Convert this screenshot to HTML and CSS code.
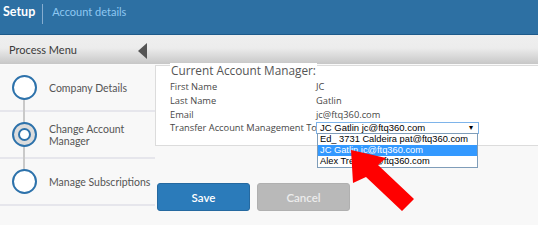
FILE: index.html
```html
<!DOCTYPE html>
<html>
<head>
<meta charset="utf-8">
<link rel="stylesheet" href="styles.css">
</head>
<body>
<header class="topbar">
  <span class="brand">Setup</span>
  <span class="divider"></span>
  <span class="crumb">Account details</span>
</header>
<div class="menubar">
  <span class="menu-title">Process Menu</span>
  <span class="collapse"></span>
</div>
<div class="main">
  <nav class="steps">
    <div class="step"><span class="dot"></span><span class="step-label">Company Details</span></div>
    <div class="step linked"><span class="dot current"><span class="inner"></span></span><span class="step-label">Change Account<br>Manager</span></div>
    <div class="step linked"><span class="dot"></span><span class="step-label">Manage Subscriptions</span></div>
  </nav>
  <section class="content">
    <div class="panel">
      <div class="panel-title">Current Account Manager:</div>
      <div class="fields">
        <span class="label">First Name</span><span class="value">JC</span>
        <span class="label">Last Name</span><span class="value">Gatlin</span>
        <span class="label">Email</span><span class="value">jc@ftq360.com</span>
        <span class="label">Transfer Account Management To</span>
        <div class="select-wrap">
          <div class="select"><span>JC Gatlin jc@ftq360.com</span><span class="caret">&#9662;</span></div>
          <ul class="options">
            <li>Ed_ 3731 Caldeira pat@ftq360.com</li>
            <li class="selected">JC Gatlin jc@ftq360.com</li>
            <li>Alex Trent ac@ftq360.com</li>
          </ul>
        </div>
      </div>
    </div>
    <div class="actions">
      <button class="btn save">Save</button>
      <button class="btn cancel">Cancel</button>
    </div>
  </section>
</div>
<svg class="pointer" width="538" height="225" viewBox="0 0 538 225">
  <polygon points="351,150 386,158 378,165 414,199 402,211 366,177 353,183" fill="#ff0000"/>
</svg>
</body>
</html>
```

FILE: styles.css
```css
* { box-sizing: border-box; }
html, body { margin: 0; padding: 0; }
body {
  width: 538px;
  height: 225px;
  overflow: hidden;
  background: #f8f8f8;
  font-family: "Lato", "Open Sans", sans-serif;
  position: relative;
}
.topbar {
  height: 35px;
  background: #2d70a3;
  border-bottom: 1px solid #1d5a8a;
  display: flex;
  align-items: flex-start;
  padding: 4px 0 0 3px;
}
.brand {
  color: #fff;
  font-weight: bold;
  font-size: 12.5px;
  line-height: 16px;
}
.divider {
  width: 1px;
  height: 20px;
  background: #86add0;
  margin: 0 9px 0 7px;
}
.crumb {
  color: #8fc8f2;
  font-size: 11px;
  line-height: 16px;
}
.menubar {
  height: 30px;
  background: linear-gradient(#efefef 0%, #ececec 45%, #c7c7c7 100%);
  border-bottom: 1px solid #fafafa;
  display: flex;
  align-items: center;
  padding-left: 9px;
}
.menu-title {
  color: #3a3a3a;
  font-size: 11px;
  width: 129px;
}
.collapse {
  width: 0;
  height: 0;
  border-top: 8px solid transparent;
  border-bottom: 8px solid transparent;
  border-right: 9px solid #555;
  margin-top: 2px;
}
.main {
  display: flex;
  align-items: flex-start;
}
.steps {
  width: 155px;
  flex: none;
}
.step {
  height: 47px;
  border-bottom: 2px solid #e6e6ec;
  display: flex;
  align-items: center;
  padding-left: 12px;
  gap: 12px;
  position: relative;
}
.step.linked::before {
  content: "";
  position: absolute;
  left: 23px;
  top: -26px;
  width: 2px;
  height: 40px;
  background: #c9c9c9;
}
.dot {
  width: 25px;
  height: 25px;
  border: 2px solid #2d72ab;
  border-radius: 50%;
  background: #fff;
  position: relative;
  z-index: 1;
  flex: none;
  display: flex;
  align-items: center;
  justify-content: center;
}
.dot.current {
  background: #dcdcdc;
}
.dot .inner {
  width: 13px;
  height: 13px;
  border: 2px solid #2d72ab;
  border-radius: 50%;
  background: #fff;
}
.step-label {
  color: #555;
  font-size: 10.5px;
  line-height: 12px;
}
.content {
  flex: 1;
  min-width: 0;
}
.panel {
  border: 1px solid #dcdcdc;
  border-right: none;
  background: #fff;
  height: 81px;
  padding: 0 0 0 14px;
  font-family: "Open Sans", sans-serif;
  color: #474747;
  font-size: 9.3px;
  line-height: 14px;
}
.panel-title {
  display: block;
  width: max-content;
  margin-top: -3px;
  background: #fff;
  padding: 0 1px;
  font-size: 11.8px;
  line-height: 14px;
  color: #555;
}
.fields {
  display: grid;
  grid-template-columns: 146px auto;
  grid-template-rows: 14px 14px 14px 12px;
  align-items: center;
  margin-top: 3px;
}
.label, .value { line-height: 14px; white-space: nowrap; }
.select-wrap {
  position: relative;
  width: 163px;
  height: 12px;
}
.select {
  height: 12px;
  border: 1px solid #7eb4ea;
  background: #fff;
  font-family: "Liberation Sans", Arial, sans-serif;
  font-size: 9.5px;
  line-height: 10px;
  color: #000;
  display: flex;
  justify-content: space-between;
  padding: 0 5px 0 3px;
  white-space: nowrap;
}
.caret { font-size: 8px; }
.options {
  position: absolute;
  top: 11px;
  left: 1px;
  width: 161px;
  margin: 0;
  padding: 0;
  list-style: none;
  background: #fff;
  border: 1px solid #7f9db9;
  font-family: "Liberation Sans", Arial, sans-serif;
  font-size: 9.3px;
  color: #000;
  z-index: 2;
}
.options li {
  height: 11px;
  line-height: 11px;
  padding-left: 2px;
  white-space: nowrap;
}
.options li.selected {
  background: #3399ff;
  color: #fff;
}
.actions {
  display: flex;
  gap: 7px;
  margin: 37px 0 0 2px;
}
.btn {
  width: 93px;
  height: 28px;
  border-radius: 3px;
  font-family: "Lato", sans-serif;
  font-size: 11.5px;
  font-weight: 600;
  color: #fff;
  padding: 0;
}
.save {
  background: #2b7bba;
  border: 1px solid #2569a0;
}
.cancel {
  background: #b9b9b9;
  border: 1px solid #b0b0b0;
  color: #ececec;
}
.pointer {
  position: absolute;
  left: 0;
  top: 0;
  pointer-events: none;
  z-index: 5;
}
```
